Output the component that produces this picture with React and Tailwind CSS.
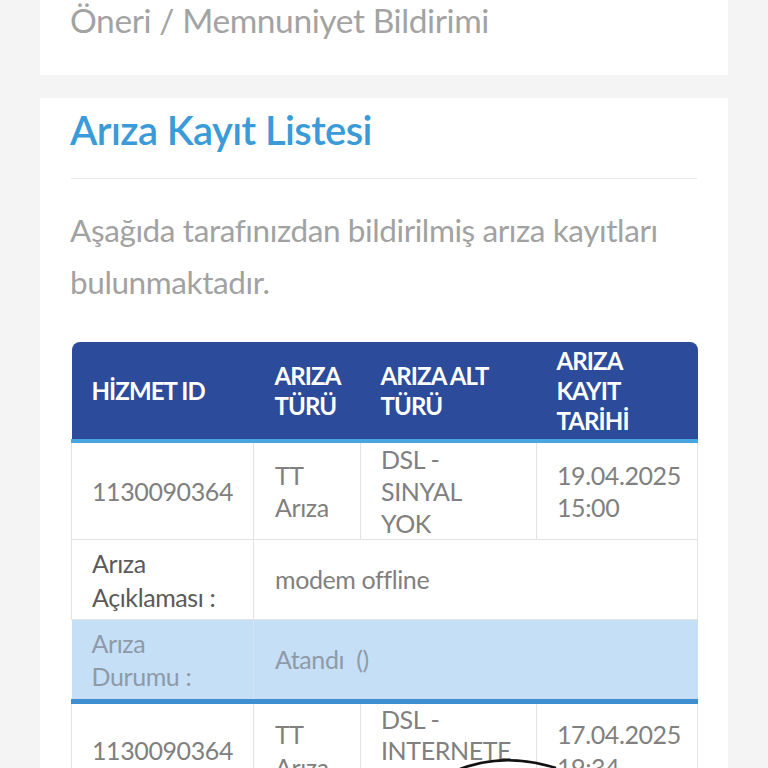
export default function App() {
  const font = { fontFamily: 'Lato, "Open Sans", sans-serif' };
  return (
    <div className="relative w-[768px] h-[768px] overflow-hidden bg-[#f4f4f4]" style={font}>
      <div className="mx-[40px] h-[75px] bg-white px-[30px] pt-[0px]">
        <div className="text-[33.5px] leading-[40px] text-[#a3a3a3] tracking-[-0.4px]">Öneri / Memnuniyet Bildirimi</div>
      </div>
      <div className="mx-[40px] mt-[23px] bg-white px-[31px] pt-[7px]">
        <h2 className="text-[40px] leading-[50px] font-semibold text-[#3a9bd8] tracking-[-0.6px] -ml-[1px]">Arıza Kayıt Listesi</h2>
        <div className="mt-[23px] h-[1px] bg-[#e8e8e8]" />
        <p className="mt-[25px] text-[31.5px] leading-[52px] text-[#a2a2a2] tracking-[-0.4px] -ml-[1px]">
          Aşağıda tarafınızdan bildirilmiş arıza kayıtları bulunmaktadır.
        </p>
        <table className="mt-[34px] w-[626px] table-fixed border-collapse text-[25px] tracking-[-0.4px]">
          <colgroup>
            <col className="w-[182px]" />
            <col className="w-[107px]" />
            <col className="w-[176px]" />
            <col className="w-[161px]" />
          </colgroup>
          <thead>
            <tr className="h-[99px] bg-[#2c4b9a] text-white text-[24px] leading-[30px] font-bold tracking-[-0.9px] text-left">
              <th className="rounded-tl-[8px] border-b-[4px] border-[#4aa6e0] pl-[20px] align-middle">HİZMET ID</th>
              <th className="border-b-[4px] border-[#4aa6e0] pl-[21px] align-middle">ARIZA<br />TÜRÜ</th>
              <th className="border-b-[4px] border-[#4aa6e0] pl-[20px] align-middle">ARIZA ALT<br />TÜRÜ</th>
              <th className="rounded-tr-[8px] border-b-[4px] border-[#4aa6e0] pl-[20px] align-middle">ARIZA<br />KAYIT<br />TARİHİ</th>
            </tr>
          </thead>
          <tbody className="text-[#808080] leading-[33px]">
            <tr className="h-[97px] leading-[32px]">
              <td className="border border-[#e3e3e3] pl-[20px] align-middle">1130090364</td>
              <td className="border border-[#e3e3e3] pl-[21px] align-middle">TT<br />Arıza</td>
              <td className="border border-[#e3e3e3] pl-[20px] align-middle">DSL -<br />SINYAL<br />YOK</td>
              <td className="border border-[#e3e3e3] pl-[20px] align-middle">19.04.2025<br />15:00</td>
            </tr>
            <tr className="h-[80px]">
              <td className="border border-[#e3e3e3] pl-[20px] align-middle text-[#5a5a5a] leading-[34px]">Arıza<br />Açıklaması :</td>
              <td colSpan={3} className="border border-[#e3e3e3] pl-[21px] align-middle">modem offline</td>
            </tr>
            <tr className="h-[82px] bg-[#c5dff7]">
              <td className="border-b-[5px] border-[#3e8fd2] pl-[20px] align-middle text-[#8f9aa8] leading-[33px]">Arıza<br />Durumu :</td>
              <td colSpan={3} className="border-l border-b-[5px] border-l-[#d5e4f2] border-b-[#3e8fd2] pl-[21px] align-middle text-[#8f9aa8]">Atandı&nbsp; ()</td>
            </tr>
            <tr className="h-[93px]">
              <td className="border border-[#e3e3e3] pl-[20px] align-middle">1130090364</td>
              <td className="border border-[#e3e3e3] pl-[21px] align-middle">TT<br />Arıza</td>
              <td className="border border-[#e3e3e3] pl-[20px] align-middle leading-[31px]">DSL -<br />INTERNETE<br />ÇIKAMIYOR</td>
              <td className="border border-[#e3e3e3] pl-[20px] align-middle">17.04.2025<br />19:34</td>
            </tr>
          </tbody>
        </table>
      </div>
      <svg className="absolute left-0 top-0 pointer-events-none" width="768" height="768" viewBox="0 0 768 768">
        <path d="M460 769 Q505 752 556 768" fill="none" stroke="#111" strokeWidth="2.5" />
      </svg>
    </div>
  );
}
